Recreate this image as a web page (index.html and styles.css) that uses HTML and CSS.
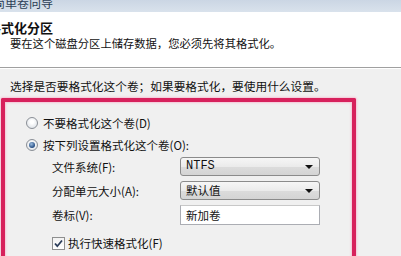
FILE: index.html
```html
<!DOCTYPE html>
<html lang="zh-CN">
<head>
<meta charset="utf-8">
<link rel="stylesheet" href="styles.css">
</head>
<body>
<div class="window">
  <div class="titlebar"><span class="title-text">新建简单卷向导</span></div>
  <div class="header">
    <div class="header-title">格式化分区</div>
    <div class="header-sub">要在这个磁盘分区上储存数据，您必须先将其格式化。</div>
  </div>
  <div class="content">
    <p class="intro">选择是否要格式化这个卷；如果要格式化，要使用什么设置。</p>
    <div class="highlight">
      <div class="options">
        <label class="radio-row"><span class="radio"></span><span>不要格式化这个卷(D)</span></label>
        <label class="radio-row"><span class="radio checked"></span><span>按下列设置格式化这个卷(O):</span></label>
        <div class="fields">
          <span class="field-label">文件系统(F):</span>
          <div class="combo"><span class="combo-value mono">NTFS</span><span class="arrow"></span></div>
          <span class="field-label">分配单元大小(A):</span>
          <div class="combo"><span class="combo-value">默认值</span><span class="arrow"></span></div>
          <span class="field-label">卷标(V):</span>
          <div class="textbox">新加卷</div>
        </div>
        <label class="check-row"><span class="checkbox"><svg viewBox="0 0 13 13" width="13" height="13"><path d="M3 6.5 L5.3 9.2 L10 3.5" fill="none" stroke="#2b3d5a" stroke-width="1.8"/></svg></span><span>执行快速格式化(F)</span></label>
      </div>
    </div>
  </div>
</div>
</body>
</html>
```

FILE: styles.css
```css
html, body {
  margin: 0;
  padding: 0;
}
body {
  width: 401px;
  height: 256px;
  overflow: hidden;
  background: #f0f0f0;
  font-family: "Noto Sans CJK SC", "Noto Sans", sans-serif;
  font-size: 11.5px;
  color: #111;
}
.window {
  width: 401px;
  height: 256px;
  overflow: hidden;
}
.titlebar {
  height: 12px;
  overflow: hidden;
  background: linear-gradient(#cbd6e4, #d9e2ec);
}
.title-text {
  display: block;
  margin-top: -4px;
  margin-left: -31px;
  font-size: 12px;
  line-height: 14px;
  color: #2c3e55;
  white-space: nowrap;
}
.header {
  height: 55px;
  background: #ffffff;
  border-bottom: 1px solid #a0a0a0;
  box-shadow: 0 1px 0 #ffffff;
  overflow: hidden;
}
.header-title {
  margin: 9px 0 0 -12px;
  font-size: 13px;
  font-weight: bold;
  line-height: 14px;
  white-space: nowrap;
}
.header-sub {
  margin: 1px 0 0 10px;
  font-size: 11.3px;
  line-height: 14px;
  white-space: nowrap;
}
.content {
  padding-top: 11px;
}
.intro {
  margin: 0 0 0 10px;
  font-size: 11.7px;
  line-height: 14px;
  white-space: nowrap;
}
.highlight {
  margin: 5px 0 0 1px;
  width: 347px;
  height: 200px;
  border: 4px solid #d7215c;
  border-bottom: none;
  border-radius: 2px 2px 0 0;
  box-shadow: 0 0 2px 1px #f6c4d5, inset 0 0 2px 1px #f6c4d5;
}
.options {
  padding: 10px 0 0 21px;
}
.radio-row {
  display: flex;
  align-items: center;
  gap: 5px;
  height: 22px;
  white-space: nowrap;
}
.radio {
  box-sizing: border-box;
  width: 12px;
  height: 12px;
  border-radius: 50%;
  border: 1px solid #8a8f96;
  background: radial-gradient(circle at 50% 40%, #ffffff 20%, #dfe3e8 80%);
  display: flex;
  align-items: center;
  justify-content: center;
}
.radio.checked::after {
  content: "";
  width: 6px;
  height: 6px;
  border-radius: 50%;
  background: radial-gradient(circle at 40% 35%, #9bbde0, #244c82 70%);
}
.fields {
  display: grid;
  grid-template-columns: 128px 140px;
  grid-template-rows: 19px 19px 20px;
  row-gap: 5px;
  margin: 1px 0 0 26px;
  align-items: center;
}
.field-label {
  white-space: nowrap;
}
.combo {
  box-sizing: border-box;
  height: 19px;
  border: 1px solid #8b8b8b;
  border-radius: 3px;
  background: linear-gradient(#f6f6f6 0%, #ebebeb 50%, #dcdcdc 51%, #d4d4d4 100%);
  display: flex;
  align-items: center;
  justify-content: space-between;
  padding: 0 6px 0 5px;
}
.combo-value {
  line-height: 17px;
}
.mono {
  font-family: "Liberation Mono", "DejaVu Sans Mono", monospace;
  font-size: 12px;
}
.arrow {
  width: 0;
  height: 0;
  border-left: 4px solid transparent;
  border-right: 4px solid transparent;
  border-top: 4px solid #111;
}
.textbox {
  box-sizing: border-box;
  height: 20px;
  border: 1px solid #abadb3;
  border-top-color: #c8c8c8;
  background: #ffffff;
  padding-left: 5px;
  line-height: 18px;
}
.check-row {
  display: flex;
  align-items: center;
  gap: 3px;
  margin: 11px 0 0 26px;
  height: 14px;
  white-space: nowrap;
}
.checkbox {
  box-sizing: border-box;
  width: 13px;
  height: 13px;
  border: 1px solid #8e8f8f;
  background: linear-gradient(#f2f2f2, #ffffff);
  display: flex;
}
.checkbox svg {
  margin: -1px;
}
```
